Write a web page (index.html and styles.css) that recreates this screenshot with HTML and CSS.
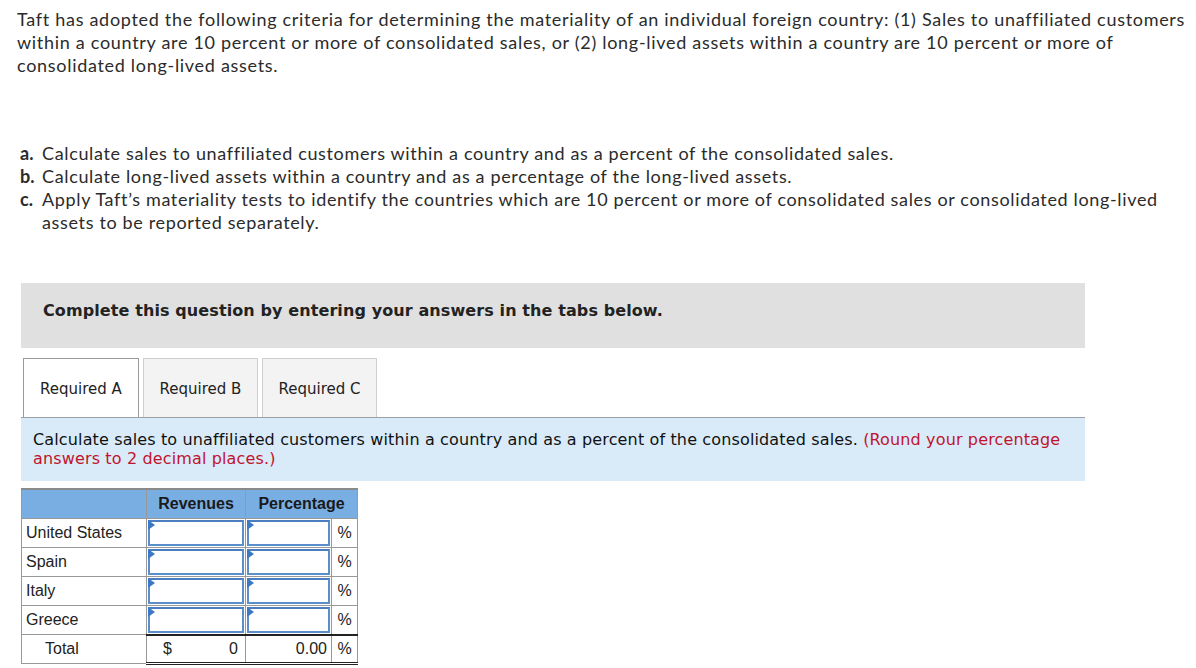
FILE: index.html
```html
<!DOCTYPE html>
<html>
<head>
<meta charset="utf-8">
<link rel="stylesheet" href="styles.css">
</head>
<body>
<div class="page">
  <p class="intro">Taft has adopted the following criteria for determining the materiality of an individual foreign country: (1) Sales to unaffiliated customers within a country are 10 percent or more of consolidated sales, or (2) long-lived assets within a country are 10 percent or more of consolidated long-lived assets.</p>
  <ol class="tasks">
    <li><span class="mark">a.</span><span>Calculate sales to unaffiliated customers within a country and as a percent of the consolidated sales.</span></li>
    <li><span class="mark">b.</span><span>Calculate long-lived assets within a country and as a percentage of the long-lived assets.</span></li>
    <li><span class="mark">c.</span><span>Apply Taft’s materiality tests to identify the countries which are 10 percent or more of consolidated sales or consolidated long-lived assets to be reported separately.</span></li>
  </ol>
  <div class="complete">Complete this question by entering your answers in the tabs below.</div>
  <div class="tabs">
    <div class="tab active">Required A</div>
    <div class="tab">Required B</div>
    <div class="tab">Required C</div>
  </div>
  <div class="instr">Calculate sales to unaffiliated customers within a country and as a percent of the consolidated sales. <span class="red">(Round your percentage answers to 2 decimal places.)</span></div>
  <table class="grid">
    <colgroup>
      <col class="w-label"><col class="w-rev"><col class="w-pct"><col class="w-sym">
    </colgroup>
    <thead>
      <tr><th></th><th>Revenues</th><th colspan="2">Percentage</th></tr>
    </thead>
    <tbody>
      <tr><td class="label">United States</td><td class="in"><div class="box"></div></td><td class="in"><div class="box"></div></td><td class="sym">%</td></tr>
      <tr><td class="label">Spain</td><td class="in"><div class="box"></div></td><td class="in"><div class="box"></div></td><td class="sym">%</td></tr>
      <tr><td class="label">Italy</td><td class="in"><div class="box"></div></td><td class="in"><div class="box"></div></td><td class="sym">%</td></tr>
      <tr><td class="label">Greece</td><td class="in"><div class="box"></div></td><td class="in"><div class="box"></div></td><td class="sym">%</td></tr>
      <tr class="total"><td class="label total-label">Total</td><td class="tot tot-rev"><div class="split"><span>$</span><span>0</span></div></td><td class="tot tot-pct">0.00</td><td class="tot sym">%</td></tr>
    </tbody>
  </table>
</div>
</body>
</html>
```
FILE: styles.css
```css
html, body { margin: 0; padding: 0; background: #fff; }
.page { padding: 8px 0 0 17px; width: 1175px; }
.intro {
  margin: 0;
  font-family: Lato, "Open Sans", sans-serif;
  font-size: 18px;
  line-height: 23px;
  letter-spacing: 0.7px;
  color: #2b2b2b;
}
.tasks {
  list-style: none;
  margin: 65px 0 0 0;
  padding: 0;
  font-family: Lato, "Open Sans", sans-serif;
  font-size: 18px;
  line-height: 23px;
  letter-spacing: 0.65px;
  color: #2b2b2b;
}
.tasks li { display: flex; padding-left: 3px; }
.tasks .mark { font-weight: 700; width: 22px; flex: none; letter-spacing: 0; }
.complete {
  margin: 49px 0 0 4px;
  width: 1042px;
  height: 65px;
  padding-left: 22px;
  background: #e0e0e0;
  font-family: Verdana, "DejaVu Sans", sans-serif;
  font-weight: 700;
  font-size: 16px;
  letter-spacing: 0.1px;
  line-height: 55px;
  color: #222;
}
.tabs {
  display: flex;
  gap: 4px;
  margin: 10px 0 0 6px;
  height: 59px;
}
.tab {
  width: 115px;
  box-sizing: border-box;
  border: 1px solid #cfcfcf;
  border-bottom: none;
  background: #f3f3f3;
  font-family: Verdana, "DejaVu Sans", sans-serif;
  font-size: 15px;
  padding-top: 2px;
  color: #222;
  display: flex;
  align-items: center;
  justify-content: center;
}
.tab.active { background: #fff; border-color: #9a9a9a; width: 116px; }
.instr {
  margin-left: 4px;
  width: 1064px;
  padding: 12px 0 13px 12px;
  box-sizing: border-box;
  background: #d9ebf9;
  border-top: 1px solid #9aa0a8;
  font-family: Verdana, "DejaVu Sans", sans-serif;
  font-size: 16px;
  letter-spacing: 0.14px;
  line-height: 19px;
  color: #111;
}
.red { color: #c0142c; }
.grid {
  margin: 7px 0 0 4px;
  border-collapse: collapse;
  table-layout: fixed;
  width: 336px;
  font-family: Arial, "Liberation Sans", sans-serif;
  font-size: 16px;
  color: #222;
}
.w-label { width: 125px; }
.w-rev { width: 99px; }
.w-pct { width: 86px; }
.w-sym { width: 26px; }
.grid tr { height: 29px; }
.grid th {
  background: #79aee3;
  padding: 0;
  border: 1px solid #999;
  border-top: 2px solid #8a8a8a;
  font-weight: 700;
  font-size: 16px;
  color: #1a1a1a;
}
.grid td { border: 1px solid #999; padding: 0; }
.grid td.label { padding-left: 4px; }
.grid td.in { padding: 1px; }
.grid td.in .box {
  position: relative;
  height: 26px;
  border: 2px solid #5b8fcc;
  border-top-color: #4a7ec0;
  background: #fff;
  box-sizing: border-box;
}
.grid td.in .box::before {
  content: "";
  position: absolute;
  left: -2px; top: -2px;
  border-left: 7px solid #3c78c4;
  border-top: 5px solid transparent;
  border-bottom: 5px solid transparent;
}
.grid td.sym { text-align: center; }
.grid tr.total td.tot { border-top: 2px solid #222; border-bottom: 3px double #222; }
.total-label { padding-left: 23px !important; }
.split { display: flex; justify-content: space-between; padding: 0 7px 0 16px; }
.tot-pct { text-align: right; padding-right: 4px !important; }
```
